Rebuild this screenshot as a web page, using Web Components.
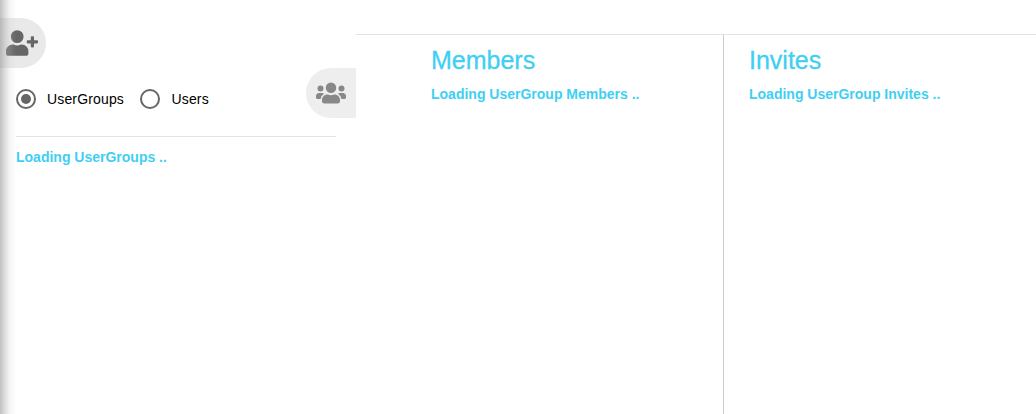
<!DOCTYPE html>
<html><head><meta charset="utf-8"><style>
html,body{margin:0;padding:0;background:#fff;height:414px;overflow:hidden;font-family:"Liberation Sans",Arial,sans-serif}
</style></head><body>
<app-shell>
  <side-panel slot="side"></side-panel>
  <detail-column slot="main" heading="Members" status="Loading UserGroup Members .." style="--col-w:368px;--pad:75px;--bd:1px solid #ccc"></detail-column>
  <detail-column slot="main" heading="Invites" status="Loading UserGroup Invites .." style="--col-w:312px;--pad:25px;--bd:0"></detail-column>
</app-shell>
<script>
function def(name,html,init){customElements.define(name,class extends HTMLElement{constructor(){super();this.attachShadow({mode:'open'}).innerHTML=html;}connectedCallback(){init&&init.call(this,this.shadowRoot);}});}
def('app-shell',`<style>
:host{display:flex;width:1036px;height:414px}
.main{flex:1;display:flex;flex-direction:column}
.top{height:34px;border-bottom:1px solid #e3e3e3;flex:none}
.cols{flex:1;display:flex;min-height:0}
</style><slot name="side"></slot><div class="main"><div class="top"></div><div class="cols"><slot name="main"></slot></div></div>`);
def('tab-button',`<style>
:host{display:flex;align-items:center;justify-content:center;width:var(--w,50px);height:50px;background:var(--bg,#eee);border-radius:var(--r);flex:none;box-sizing:border-box;padding:var(--p,0)}
</style><slot></slot>`);
def('radio-option',`<style>
:host{display:inline-flex;align-items:center;gap:11px;font-size:14px;letter-spacing:.15px;color:#000;line-height:20px}
.r{width:20px;height:20px;box-sizing:border-box;border:2px solid #666;border-radius:50%;display:flex;align-items:center;justify-content:center}
.d{width:10px;height:10px;border-radius:50%;background:#666;display:none}
:host([checked]) .d{display:block}
</style><span class="r"><span class="d"></span></span><span><slot></slot></span>`);
def('status-text',`<style>
:host{display:block;color:#3fcff3;font-weight:700;font-size:14px;line-height:16px}
</style><slot></slot>`);
def('side-panel',`<style>
:host{display:block;width:356px;height:414px;flex:none;position:relative;box-sizing:border-box;padding-top:18px}
.shade{position:absolute;left:0;top:0;bottom:0;width:16px;background:linear-gradient(to right,rgba(150,150,150,.6),rgba(170,170,170,.4) 30%,rgba(200,200,200,.2) 60%,rgba(255,255,255,0));pointer-events:none}
.row{display:flex;justify-content:space-between;align-items:flex-start;height:50px;padding-left:16px}
.radios{display:flex;gap:16.500px;margin-top:21px}
hr{border:0;height:1px;background:#e3e3e3;margin:18px 20px 0 16px}
status-text{margin:12px 0 0 16px}
svg{display:block}
</style>
<tab-button style="--w:46px;--r:0 25px 25px 0;--bg:#e9e9e9;--p:0 3px 0 0"><svg width="32" height="26" viewBox="0 0 640 512" fill="#666"><path d="M224 256a128 128 0 1 0 0-256 128 128 0 0 0 0 256zm89.600 32h-16.700a174.100 174.100 0 0 1-145.800 0h-16.700C60.200 288 0 348.200 0 422.400V464c0 26.500 21.500 48 48 48h352c26.500 0 48-21.500 48-48v-41.600c0-74.200-60.200-134.400-134.400-134.400zM624 200h-64v-64c0-8.800-7.200-16-16-16h-32c-8.800 0-16 7.200-16 16v64h-64c-8.800 0-16 7.200-16 16v32c0 8.800 7.200 16 16 16h64v64c0 8.800 7.200 16 16 16h32c8.800 0 16-7.200 16-16v-64h64c8.800 0 16-7.200 16-16v-32c0-8.800-7.200-16-16-16z"/></svg></tab-button>
<div class="row"><div class="radios"><radio-option checked>UserGroups</radio-option><radio-option>Users</radio-option></div>
<tab-button style="--r:25px 0 0 25px;--bg:#eee"><svg width="30" height="24" viewBox="0 0 640 512" fill="#888"><path d="M96 224a64 64 0 1 0 0-128 64 64 0 0 0 0 128zm448 0a64 64 0 1 0 0-128 64 64 0 0 0 0 128zm32 32h-64a63.800 63.800 0 0 0-45.100 18.600A146.300 146.300 0 0 1 542 384h66c17.700 0 32-14.300 32-32v-32c0-35.300-28.700-64-64-64zm-256 0a112 112 0 1 0 0-224 112 112 0 0 0 0 224zm76.800 32h-8.300a154.600 154.600 0 0 1-137 0h-8.300C179.600 288 128 339.600 128 403.200V432c0 26.500 21.500 48 48 48h288c26.500 0 48-21.500 48-48v-28.800c0-63.600-51.600-115.200-115.200-115.200zm-223.700-13.400A63.800 63.800 0 0 0 128 256H64c-35.300 0-64 28.700-64 64v32c0 17.700 14.300 32 32 32h65.900a146.600 146.600 0 0 1 75.200-109.400z"/></svg></tab-button></div>
<hr><status-text>Loading UserGroups ..</status-text><div class="shade"></div>`);
def('detail-column',`<style>
:host{display:block;box-sizing:border-box;width:var(--col-w);border-right:var(--bd);padding-left:var(--pad);padding-top:11px}
h2{margin:0 0 12px;font-weight:400;font-size:25px;line-height:28px;color:#3fcff3;-webkit-text-stroke:.3px #3fcff3}
</style><h2></h2><status-text></status-text>`,function(s){s.querySelector('h2').textContent=this.getAttribute('heading');s.querySelector('status-text').textContent=this.getAttribute('status');});
</script></body></html>
